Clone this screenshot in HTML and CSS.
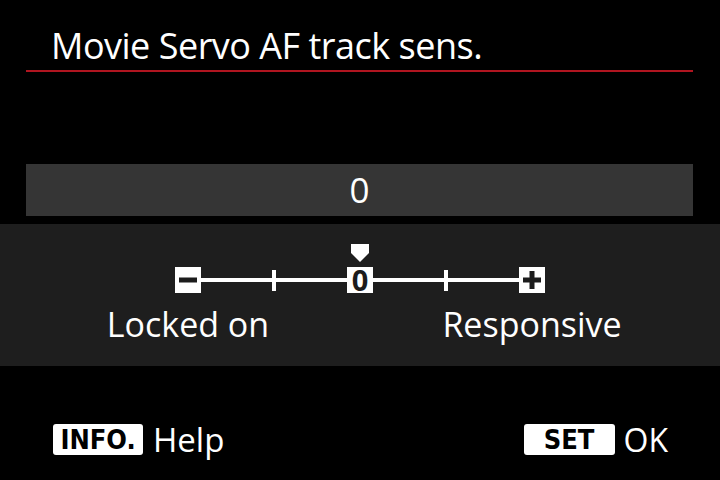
FILE: index.html
```html
<!DOCTYPE html>
<html>
<head>
<meta charset="utf-8">
<link rel="stylesheet" href="styles.css">
</head>
<body>
<div class="screen">
  <header class="header"><h1 class="title">Movie Servo AF track sens.</h1></header>
  <div class="value-bar">0</div>
  <section class="band">
    <div class="marker-row">
      <svg class="marker" width="18" height="18" viewBox="0 0 18 18"><polygon points="0,0 18,0 18,9 9,18 0,9" fill="#fff"/></svg>
    </div>
    <div class="scale">
      <span class="box"><svg width="26" height="26" viewBox="0 0 26 26"><rect x="4" y="10.5" width="18" height="5" fill="#1c1c1c"/></svg></span>
      <span class="seg"></span>
      <span class="tick"></span>
      <span class="seg"></span>
      <span class="box zero">0</span>
      <span class="seg"></span>
      <span class="tick"></span>
      <span class="seg"></span>
      <span class="box"><svg width="26" height="26" viewBox="0 0 26 26"><rect x="4" y="10.5" width="18" height="5" fill="#1c1c1c"/><rect x="10.5" y="4" width="5" height="18" fill="#1c1c1c"/></svg></span>
    </div>
    <div class="labels">
      <span class="label">Locked on</span>
      <span class="label">Responsive</span>
    </div>
  </section>
  <footer class="footer">
    <div class="hint"><span class="key key-info">INFO.</span><span class="hint-text">Help</span></div>
    <div class="hint"><span class="key key-set">SET</span><span class="hint-text ok">OK</span></div>
  </footer>
</div>
</body>
</html>
```

FILE: styles.css
```css
html, body {
  margin: 0;
  padding: 0;
  background: #000;
}
.screen {
  width: 720px;
  height: 480px;
  background: #000;
  color: #fff;
  font-family: "Open Sans", "Noto Sans", sans-serif;
  display: flex;
  flex-direction: column;
  overflow: hidden;
}
.header {
  margin: 0 27px 0 26px;
  padding: 26px 0 4px 25px;
  border-bottom: 2px solid #b01520;
}
.title {
  margin: 0;
  font-weight: 400;
  font-size: 36px;
  line-height: 40px;
  letter-spacing: -0.5px;
}
.value-bar {
  margin: 92px 27px 0 26px;
  height: 52px;
  background: #353535;
  text-align: center;
  font-size: 35px;
  line-height: 52px;
}
.band {
  margin-top: 8px;
  background: #1e1e1e;
  padding: 20px 16px 22px;
  display: flex;
  flex-direction: column;
}
.marker-row {
  display: flex;
  justify-content: center;
  height: 18px;
}
.marker { display: block; }
.scale {
  margin: 5px auto 0;
  width: 370px;
  height: 26px;
  display: flex;
  align-items: center;
}
.box {
  width: 26px;
  height: 26px;
  background: #fff;
  flex: none;
  display: flex;
  align-items: center;
  justify-content: center;
}
.box svg { display: block; }
.zero {
  color: #1c1c1c;
  font-weight: 700;
  font-size: 29px;
  line-height: 26px;
}
.seg {
  flex: 1;
  height: 4px;
  background: #fff;
}
.tick {
  flex: none;
  width: 4px;
  height: 21px;
  background: #fff;
}
.labels {
  display: flex;
  margin-top: 11px;
}
.label {
  flex: 1;
  text-align: center;
  font-size: 34px;
  line-height: 40px;
}
.footer {
  margin-top: 58px;
  padding: 0 52px 0 53px;
  display: flex;
  justify-content: space-between;
}
.hint {
  display: flex;
  align-items: center;
  height: 31px;
}
.key {
  height: 31px;
  background: #fff;
  color: #000;
  border-radius: 3px;
  font-family: "DejaVu Sans Condensed", "DejaVu Sans", sans-serif;
  font-stretch: condensed;
  font-weight: 700;
  font-size: 27px;
  line-height: 31px;
  text-align: center;
  display: flex;
  align-items: center;
  justify-content: center;
}
.key-info { width: 90px; margin-right: 10px; }
.key-set { width: 91px; margin-right: 9px; }
.hint-text {
  font-size: 33px;
  line-height: 31px;
}
.ok { font-size: 32px; }
```
